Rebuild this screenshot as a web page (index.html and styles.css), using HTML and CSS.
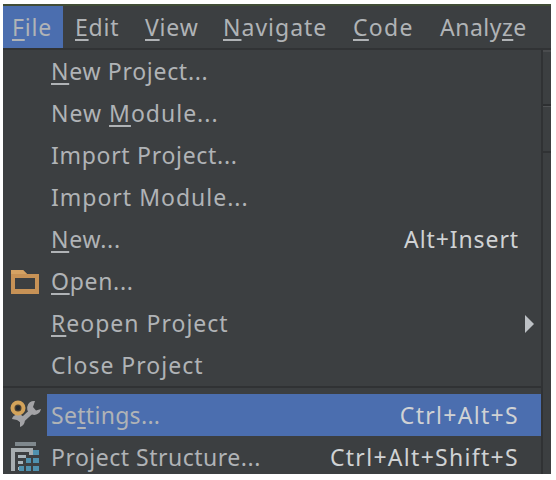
FILE: index.html
```
<!DOCTYPE html>
<html lang="en">
<head>
<meta charset="utf-8">
<title>File menu</title>
<link rel="stylesheet" href="styles.css">
</head>
<body>
<div class="window">
  <nav class="menubar">
    <span class="tab active"><u>F</u>ile</span>
    <span class="tab edit"><u>E</u>dit</span>
    <span class="tab view"><u>V</u>iew</span>
    <span class="tab navigate"><u>N</u>avigate</span>
    <span class="tab code"><u>C</u>ode</span>
    <span class="tab analyze">Analy<u>z</u>e</span>
  </nav>
  <div class="content">
    <div class="menu">
      <div class="item"><span class="icon"></span><span class="label"><u>N</u>ew Project...</span></div>
      <div class="item"><span class="icon"></span><span class="label wide">New <u>M</u>odule...</span></div>
      <div class="item"><span class="icon"></span><span class="label">Import Project...</span></div>
      <div class="item"><span class="icon"></span><span class="label wide">Import Module...</span></div>
      <div class="item"><span class="icon"></span><span class="label"><u>N</u>ew...</span><span class="key insert">Alt+Insert</span></div>
      <div class="item"><span class="icon">
        <svg width="44" height="42" viewBox="0 0 44 42"><path d="M8 10h12l4 4h12v20H8z M12 18v11h20V18z" fill="#c79256" fill-rule="evenodd"/><path d="M8 10h12l4 4H8z" fill="#d5a263"/></svg>
      </span><span class="label"><u>O</u>pen...</span></div>
      <div class="item"><span class="icon"></span><span class="label wide"><u>R</u>eopen Project</span>
        <svg class="arrow" width="10" height="18" viewBox="0 0 10 18"><path d="M0 0l9 9-9 9z" fill="#bdc1c5"/></svg></div>
      <div class="item"><span class="icon"></span><span class="label wide">Close Project</span></div>
      <div class="separator"></div>
      <div class="item selected"><span class="icon">
        <svg width="44" height="42" viewBox="0 0 44 42"><path d="M17 28L29 17" stroke="#a3a3a6" stroke-width="5"/><path d="M32 7a7 7 0 1 0 6 8l-5 1.500-3-3.500z M9 25a6.500 6.500 0 1 1 8 8l0-5-3-2z" fill="#a3a3a6"/><circle cx="15" cy="14" r="5.500" fill="#4a4032" stroke="#d3a35a" stroke-width="4"/><circle cx="15" cy="14" r="2.200" fill="#252a30"/></svg>
      </span><span class="label settings">Se<u>t</u>tings...</span><span class="key">Ctrl+Alt+S</span></div>
      <div class="item last"><span class="icon">
        <svg width="44" height="38" viewBox="0 0 44 38"><path d="M12 6h21v4H12z" fill="#7f888d"/><path d="M10 35V14h18v5" fill="none" stroke="#a7adb0" stroke-width="4"/><path d="M15 19h8v3h-8zM15 25h5v3h-5zM15 31h3v3h-3z" fill="#a9b4ba"/><path d="M30 14h6v5h-6zM23 22h5v5h-5zM30 22h6v5h-6zM16 30h5v5h-5zM23 30h5v5h-5zM30 30h6v5h-6z" fill="#4f91ae"/></svg>
      </span><span class="label structure">Project Structure...</span><span class="key">Ctrl+Alt+Shift+S</span></div>
    </div>
    <div class="backdrop"><div class="toolbar"></div><div class="navbar"></div></div>
  </div>
</div>
</body>
</html>
```
FILE: styles.css
```
body {
  margin: 0;
  padding: 4px 5px 6px 3px;
  height: 470px;
  background: #fff;
  font: 23px/42px "Noto Sans", sans-serif;
  color: #b0b3b6;
}
.window {
  height: 470px;
  overflow: hidden;
  background: #3c3f41;
}
.menubar {
  display: flex;
  box-sizing: border-box;
  height: 46px;
  border-top: 2px solid #414d36;
  border-bottom: 2px solid #313335;
  letter-spacing: 0.8px;
}
.tab {
  box-sizing: border-box;
  padding-left: 12px;
  white-space: nowrap;
}
.active { width: 60px; padding-left: 9px; background: #4b6eaf; }
.edit { width: 70px; }
.view { width: 78px; }
.navigate { width: 130px; letter-spacing: 1px; }
.code { width: 87px; letter-spacing: 1.3px; }
.analyze { letter-spacing: 0.5px; }
u {
  text-decoration: underline 2px;
  text-underline-offset: 3px;
  text-decoration-skip-ink: none;
}
.content { display: flex; }
.menu { width: 538px; border-right: 2px solid #303234; }
.item { display: flex; height: 42px; white-space: nowrap; }
.icon { width: 44px; padding-right: 4px; flex: none; }
.icon svg { display: block; }
.label { letter-spacing: 0.7px; }
.wide { letter-spacing: 1px; }
.settings { letter-spacing: 0.3px; }
.structure { letter-spacing: 0.5px; }
.key {
  margin-left: auto;
  padding-right: 22px;
  color: #d0d2d4;
  letter-spacing: 1.3px;
}
.insert { letter-spacing: 0.9px; }
.arrow { margin: 13px 6px 0 auto; }
.separator {
  box-sizing: border-box;
  height: 8px;
  border-top: 2px solid #303234;
}
.selected { background: linear-gradient(90deg, #3c3f41 44px, #4b6eaf 44px); }
.backdrop { flex: 1; }
.toolbar { height: 52px; border-top: 2px solid #4a4c4e; border-bottom: 2px solid #2d2f31; }
.navbar { height: 44px; border-top: 1px solid #505254; border-bottom: 2px solid #303234; }
```
